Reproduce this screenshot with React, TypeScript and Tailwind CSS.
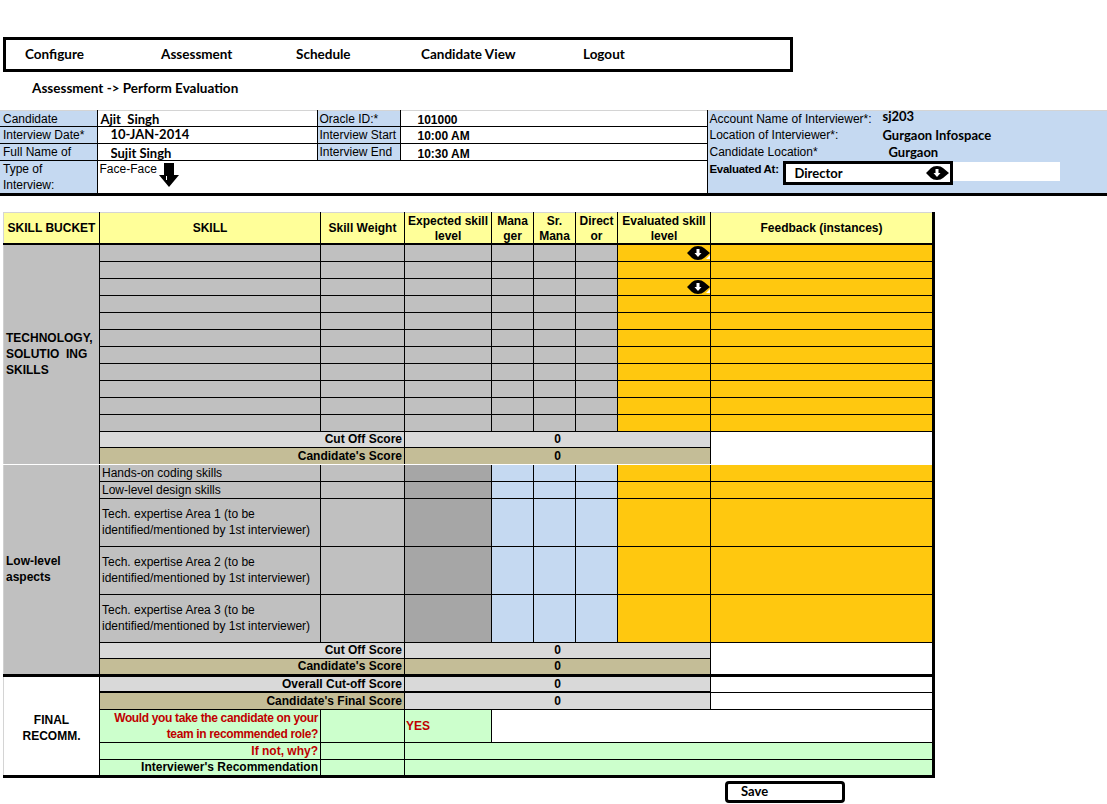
import React from "react";

const AR = "font-['Liberation_Sans',Arial,sans-serif]";
const LA = "font-['Lato','Open_Sans',sans-serif]";

function BlockArrow() {
  return (
    <svg width="22" height="25" viewBox="0 0 22 25" className="inline-block">
      <polygon points="6,0 16,0 16,12 21,12 11,24 1,12 6,12" fill="black" />
      <line x1="8.5" y1="13" x2="8.5" y2="17" stroke="white" strokeWidth="1" />
    </svg>
  );
}

function DropIcon() {
  return (
    <svg width="23" height="14" viewBox="0 0 23 14" className="block">
      <path d="M0 7 L5 2 Q7 0 11 0 Q15 0 17 2 L23 7 L17 12 Q15 14 11 14 Q7 14 5 12 Z" fill="black" />
      <polygon points="9.5,3 12.5,3 12.5,7 14.5,7 11,11 7.5,7 9.5,7" fill="white" />
      <polygon points="19,13 23,9 23,13" fill="white" />
    </svg>
  );
}

const cell = "border border-black p-0";
const gray = "bg-[#c0c0c0]";
const orange = "bg-[#ffc80f]";
const blue = "bg-[#c5d9f1]";
const dgray = "bg-[#a6a6a6]";
const lgray = "bg-[#d9d9d9]";
const tan = "bg-[#c4bd97]";
const green = "bg-[#ccffcc]";

function TechRow({ i }: { i: number }) {
  return (
    <tr className="h-[17px]">
      {i === 0 && (
        <td
          rowSpan={13}
          className={`${cell} ${gray} border-l-[#d0d0d0] border-b-white align-middle px-[2px] font-bold leading-[16px]`}
        >
          TECHNOLOGY,
          <br />
          SOLUTIO&nbsp; ING
          <br />
          SKILLS
        </td>
      )}
      <td className={`${cell} ${gray}`}></td>
      <td className={`${cell} ${gray}`}></td>
      <td className={`${cell} ${gray}`}></td>
      <td className={`${cell} ${gray}`}></td>
      <td className={`${cell} ${gray}`}></td>
      <td className={`${cell} ${gray}`}></td>
      <td className={`${cell} ${orange}`}>
        {(i === 0 || i === 2) && (
          <div className="flex justify-end h-[15px] items-center">
            <DropIcon />
          </div>
        )}
      </td>
      <td className={`${cell} ${orange} border-r-[3px]`}></td>
    </tr>
  );
}

function LowRow({ text, first, tall }: { text: React.ReactNode; first?: boolean; tall?: boolean }) {
  return (
    <tr className={tall ? "h-[48px]" : "h-[17px]"}>
      {first && (
        <td
          rowSpan={7}
          className={`${cell} ${gray} border-l-[#d0d0d0] border-b-[3px] align-middle px-[2px] font-bold leading-[16px]`}
        >
          Low-level
          <br />
          aspects
        </td>
      )}
      <td className={`${cell} ${gray} px-[2px] ${tall ? "leading-[16px]" : ""} align-middle`}>{text}</td>
      <td className={`${cell} ${gray}`}></td>
      <td className={`${cell} ${dgray}`}></td>
      <td className={`${cell} ${blue}`}></td>
      <td className={`${cell} ${blue}`}></td>
      <td className={`${cell} ${blue}`}></td>
      <td className={`${cell} ${orange}`}></td>
      <td className={`${cell} ${orange} border-r-[3px]`}></td>
    </tr>
  );
}

function ScoreRows({ last }: { last?: boolean }) {
  const bb = last ? "border-b-[3px]" : "border-b-white";
  return (
    <>
      <tr className="h-[16px]">
        <td colSpan={2} className={`${cell} ${lgray} text-right font-bold px-[2px]`}>
          Cut Off Score
        </td>
        <td colSpan={5} className={`${cell} ${lgray} text-center font-bold`}>
          0
        </td>
        <td rowSpan={2} className={`${cell} bg-white border-r-[3px] ${bb}`}></td>
      </tr>
      <tr className="h-[17px]">
        <td colSpan={2} className={`${cell} ${tan} text-right font-bold px-[2px] ${bb}`}>
          Candidate's Score
        </td>
        <td colSpan={5} className={`${cell} ${tan} text-center font-bold ${bb}`}>
          0
        </td>
      </tr>
    </>
  );
}

export default function App() {
  const area = (n: number) => (
    <>
      Tech. expertise Area {n} (to be
      <br />
      identified/mentioned by 1st interviewer)
    </>
  );
  return (
    <div className={`w-[1107px] h-[804px] bg-white overflow-hidden text-black ${AR} text-[12px]`}>
      {/* Nav */}
      <div className="pt-[37px] pl-[3px]">
        <div className={`w-[790px] h-[35px] border-[3px] border-black flex items-center pl-[19px] ${LA} font-bold text-[13.5px]`}>
          <span className="w-[136px]">Configure</span>
          <span className="w-[135px]">Assessment</span>
          <span className="w-[125px]">Schedule</span>
          <span className="w-[162px]">Candidate View</span>
          <span>Logout</span>
        </div>
      </div>
      <div className={`h-[32px] flex items-center pl-[32px] ${LA} font-bold text-[13.5px]`}>
        Assessment -&gt; Perform Evaluation
      </div>

      {/* Info table */}
      <table className="mt-[6px] w-[1107px] table-fixed border-collapse leading-[14px]">
        <colgroup>
          <col className="w-[97px]" />
          <col className="w-[220px]" />
          <col className="w-[83px]" />
          <col className="w-[307px]" />
          <col className="w-[400px]" />
        </colgroup>
        <tbody>
          <tr className="h-[16px]">
            <td className={`border border-black border-t-[#d4d4d4] border-l-0 ${blue} px-[3px]`}>Candidate</td>
            <td className={`border border-black border-t-[#d4d4d4] px-[3px] ${LA} font-bold text-[13px]`}>Ajit&nbsp; Singh</td>
            <td className={`border border-black border-t-[#d4d4d4] ${blue} px-[2px]`}>Oracle ID:*</td>
            <td className="border border-black border-t-[#d4d4d4] pl-[17px] font-bold">
              <div className="h-[14px] pt-[1px]">101000</div>
            </td>
            <td className={`border-l border-black border-t border-t-[#d4d4d4] ${blue} pl-[2px]`}>
              <div className="flex items-start h-[14px]">
                <span className="w-[173px]">Account Name of Interviewer*:</span>
                <span className={`${LA} font-bold text-[13px] -mt-[3px]`}>sj203</span>
              </div>
            </td>
          </tr>
          <tr className="h-[17px]">
            <td className={`border border-black border-l-0 ${blue} px-[3px]`}>Interview Date*</td>
            <td className={`border border-black pl-[13px] ${LA} font-bold text-[13px]`}>
              <div className="h-[15px] -mt-[1px]">10-JAN-2014</div>
            </td>
            <td className={`border border-black ${blue} px-[2px]`}>Interview Start</td>
            <td className="border border-black pl-[17px] font-bold">
              <div className="h-[15px] pt-[1px]">10:00 AM</div>
            </td>
            <td className={`border-l border-black ${blue} pl-[2px]`}>
              <div className="flex items-center h-[15px]">
                <span className="w-[173px]">Location of Interviewer*:</span>
                <span className={`${LA} font-bold text-[13px]`}>Gurgaon Infospace</span>
              </div>
            </td>
          </tr>
          <tr className="h-[17px]">
            <td className={`border border-black border-l-0 ${blue} px-[3px]`}>Full Name of</td>
            <td className={`border border-black pl-[13px] ${LA} font-bold text-[13px]`}>
              <div className="h-[15px] overflow-hidden pt-[1px]">Sujit Singh</div>
            </td>
            <td className={`border border-black ${blue} px-[2px]`}>Interview End</td>
            <td className="border border-black pl-[17px] font-bold">
              <div className="h-[15px] overflow-hidden pt-[2px]">10:30 AM</div>
            </td>
            <td className={`border-l border-black ${blue} pl-[2px]`}>
              <div className="flex items-center h-[15px]">
                <span className="w-[179px]">Candidate Location*</span>
                <span className={`${LA} font-bold text-[13px]`}>Gurgaon</span>
              </div>
            </td>
          </tr>
          <tr className="h-[33px]">
            <td className={`border border-black border-l-0 border-b-[3px] ${blue} px-[3px] leading-[16px] align-top`}>
              Type of
              <br />
              Interview:
            </td>
            <td colSpan={3} className="border border-black border-b-[3px] px-[2px] align-top leading-[16px]">
              <div className="flex items-start">
                <span>Face-Face</span>
                <span className="ml-[1px] mt-[2px]">
                  <BlockArrow />
                </span>
              </div>
            </td>
            <td className={`border-l border-black border-b-[3px] ${blue} pl-[2px] align-top`}>
              <div className="flex items-start">
                <span className="font-bold pt-[1px] w-[73px] whitespace-nowrap text-[11.5px] tracking-[-0.3px]">Evaluated At:</span>
                <div className="w-[170px] h-[24px] border-[3px] border-black bg-white flex items-center justify-between pl-[9px] pr-[1px]">
                  <span className={`${LA} font-bold text-[13px]`}>Director</span>
                  <DropIcon />
                </div>
                <div className="w-[107px] h-[19px] bg-white mt-[1px]"></div>
              </div>
            </td>
          </tr>
        </tbody>
      </table>

      {/* Main table */}
      <table className="mt-[16px] ml-[3px] w-[930px] table-fixed border-collapse leading-[14px]">
        <colgroup>
          <col className="w-[96px]" />
          <col className="w-[221px]" />
          <col className="w-[84px]" />
          <col className="w-[87px]" />
          <col className="w-[42px]" />
          <col className="w-[42px]" />
          <col className="w-[42px]" />
          <col className="w-[93px]" />
          <col className="w-[223px]" />
        </colgroup>
        <thead>
          <tr className="h-[31px] bg-[#ffff99] font-bold leading-[15px]">
            <th className={`${cell} border-t-[#d4d4d4] border-l-[#d4d4d4] border-b-2 text-center`}>SKILL BUCKET</th>
            <th className={`${cell} border-t-[#d4d4d4] border-b-2 text-center`}>SKILL</th>
            <th className={`${cell} border-t-[#d4d4d4] border-b-2 text-center`}>Skill Weight</th>
            <th className={`${cell} border-t-[#d4d4d4] border-b-2 text-center align-top`}>
              <div className="h-[30px] overflow-hidden pt-[1px]">
                Expected skill
                <br />
                level
              </div>
            </th>
            <th className={`${cell} border-t-[#d4d4d4] border-b-2 text-center align-top`}>
              <div className="h-[30px] overflow-hidden pt-[1px]">
                Mana
                <br />
                ger
              </div>
            </th>
            <th className={`${cell} border-t-[#d4d4d4] border-b-2 text-center align-top`}>
              <div className="h-[30px] overflow-hidden pt-[1px]">
                Sr.
                <br />
                Mana
              </div>
            </th>
            <th className={`${cell} border-t-[#d4d4d4] border-b-2 text-center align-top`}>
              <div className="h-[30px] overflow-hidden pt-[1px]">
                Direct
                <br />
                or
              </div>
            </th>
            <th className={`${cell} border-t-[#d4d4d4] border-b-2 text-center align-top`}>
              <div className="h-[30px] overflow-hidden pt-[1px]">
                Evaluated skill
                <br />
                level
              </div>
            </th>
            <th className={`${cell} border-t-[#d4d4d4] border-b-2 border-r-[3px] text-center`}>Feedback (instances)</th>
          </tr>
        </thead>
        <tbody>
          {Array.from({ length: 11 }).map((_, i) => (
            <TechRow key={i} i={i} />
          ))}
          <ScoreRows />
          <LowRow first text="Hands-on coding skills" />
          <LowRow text="Low-level design skills" />
          <LowRow tall text={area(1)} />
          <LowRow tall text={area(2)} />
          <LowRow tall text={area(3)} />
          <ScoreRows last />
          {/* Final */}
          <tr className="h-[17px]">
            <td rowSpan={5} className={`${cell} border-l-[#d4d4d4] border-b-[3px] bg-white text-center font-bold leading-[16px] pt-[4px]`}>
              FINAL
              <br />
              RECOMM.
            </td>
            <td colSpan={2} className={`${cell} ${lgray} border-b-2 text-right font-bold px-[2px]`}>
              Overall Cut-off Score
            </td>
            <td colSpan={5} className={`${cell} ${lgray} border-b-2 text-center font-bold`}>
              0
            </td>
            <td className={`${cell} bg-white border-r-[3px]`}></td>
          </tr>
          <tr className="h-[17px]">
            <td colSpan={2} className={`${cell} ${tan} text-right font-bold px-[2px]`}>
              Candidate's Final Score
            </td>
            <td colSpan={5} className={`${cell} ${lgray} text-center font-bold`}>
              0
            </td>
            <td className={`${cell} bg-white border-r-[3px]`}></td>
          </tr>
          <tr className="h-[32px]">
            <td className={`${cell} ${green} text-right font-bold px-[2px] text-[#c00000] leading-[16px] whitespace-nowrap tracking-[-0.35px]`}>
              Would you take the candidate on your
              <br />
              team in recommended role?
            </td>
            <td className={`${cell} ${green}`}></td>
            <td className={`${cell} ${green} font-bold text-[#c00000] px-[1px]`}>YES</td>
            <td colSpan={5} className={`${cell} bg-white border-r-[3px]`}></td>
          </tr>
          <tr className="h-[17px]">
            <td className={`${cell} ${green} text-right font-bold px-[2px] text-[#c00000]`}>If not, why?</td>
            <td className={`${cell} ${green}`}></td>
            <td colSpan={6} className={`${cell} ${green} border-r-[3px]`}></td>
          </tr>
          <tr className="h-[17px]">
            <td className={`${cell} ${green} border-b-[3px] text-right font-bold px-[2px] whitespace-nowrap`}>Interviewer's Recommendation</td>
            <td className={`${cell} ${green} border-b-[3px]`}></td>
            <td colSpan={6} className={`${cell} ${green} border-b-[3px] border-r-[3px]`}></td>
          </tr>
        </tbody>
      </table>

      <div className="pl-[725px] pt-[3px]">
        <div className={`w-[120px] h-[22px] border-[3px] border-black rounded-[4px] flex items-center pl-[13px] ${LA} font-bold text-[13px]`}>
          Save
        </div>
      </div>
    </div>
  );
}
